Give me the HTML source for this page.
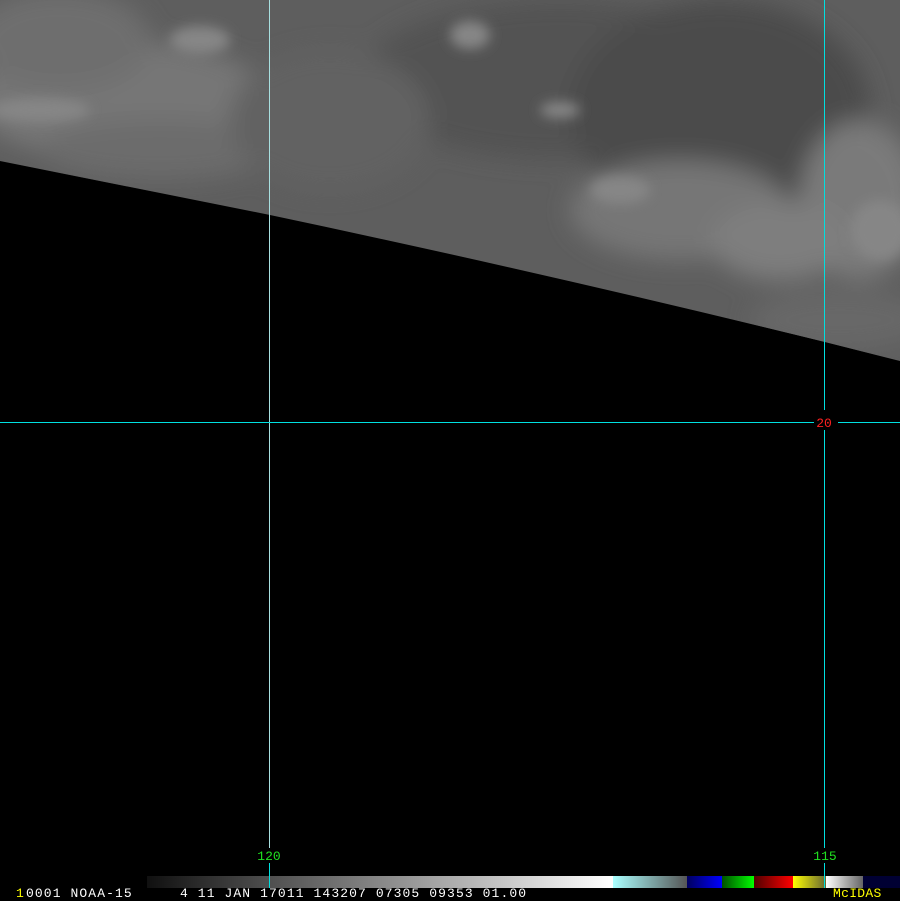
<!DOCTYPE html>
<html><head><style>
html,body{margin:0;padding:0;background:#000;width:900px;height:900px;overflow:hidden}
.t{position:absolute;font-family:"Liberation Mono",monospace;font-size:13px;line-height:13px;letter-spacing:1.1px}
</style></head><body>
<svg width="900" height="900" style="position:absolute;left:0;top:0" xmlns="http://www.w3.org/2000/svg">
<defs>
<clipPath id="c"><path d="M0,0 H900 V361 L825,342 Q540,272 270,215 L0,161 Z"/></clipPath>
<filter id="b" x="-50%" y="-50%" width="200%" height="200%"><feGaussianBlur stdDeviation="12"/></filter>
<filter id="b2" x="-50%" y="-50%" width="200%" height="200%"><feGaussianBlur stdDeviation="6"/></filter>
</defs>
<rect width="900" height="900" fill="#000"/>
<g clip-path="url(#c)">
<rect width="900" height="370" fill="#5e5e5e"/>
<g filter="url(#b)">
<ellipse cx="560" cy="80" rx="200" ry="80" fill="#525252"/>
<ellipse cx="720" cy="110" rx="150" ry="110" fill="#4c4c4c"/>
<ellipse cx="120" cy="100" rx="150" ry="60" fill="#767676"/>
<ellipse cx="60" cy="40" rx="90" ry="50" fill="#6e6e6e"/>
<ellipse cx="160" cy="150" rx="120" ry="30" fill="#6c6c6c"/>
<ellipse cx="680" cy="210" rx="110" ry="50" fill="#767676"/>
<ellipse cx="860" cy="200" rx="60" ry="80" fill="#7a7a7a"/>
<ellipse cx="780" cy="240" rx="70" ry="40" fill="#7e7e7e"/>
<ellipse cx="330" cy="120" rx="100" ry="70" fill="#626262"/>
<ellipse cx="840" cy="320" rx="90" ry="30" fill="#686868"/>
</g>
<g filter="url(#b2)" fill="#868686">
<ellipse cx="40" cy="110" rx="50" ry="12"/>
<ellipse cx="200" cy="40" rx="30" ry="14"/>
<ellipse cx="470" cy="35" rx="20" ry="14"/>
<ellipse cx="620" cy="190" rx="30" ry="14"/>
<ellipse cx="880" cy="230" rx="30" ry="30"/>
<ellipse cx="560" cy="110" rx="20" ry="8"/>
</g>
</g>
<rect x="269" y="0" width="1" height="848" fill="#a8e0e0"/>
<rect x="269" y="863" width="1" height="25" fill="#00e0e0"/>
<rect x="824" y="0" width="1" height="848" fill="#00e0e0"/>
<rect x="824" y="863" width="1" height="25" fill="#00e0e0"/>
<rect x="0" y="422" width="814" height="1" fill="#00e0e0"/>
<rect x="838" y="422" width="62" height="1" fill="#00e0e0"/>
<rect x="824" y="410" width="1" height="20" fill="#000"/>
<text x="824" y="427" fill="#ff2020" font-family="Liberation Mono,monospace" font-size="13" text-anchor="middle">20</text>
<text x="269" y="860" fill="#20e020" font-family="Liberation Mono,monospace" font-size="13" text-anchor="middle">120</text>
<text x="825" y="860" fill="#20e020" font-family="Liberation Mono,monospace" font-size="13" text-anchor="middle">115</text>
<defs>
<linearGradient id="g1"><stop offset="0" stop-color="#101010"/><stop offset="1" stop-color="#ffffff"/></linearGradient>
<linearGradient id="g2"><stop offset="0" stop-color="#aaffff"/><stop offset="1" stop-color="#555555"/></linearGradient>
<linearGradient id="g3"><stop offset="0" stop-color="#000060"/><stop offset="1" stop-color="#0000ff"/></linearGradient>
<linearGradient id="g4"><stop offset="0" stop-color="#005000"/><stop offset="1" stop-color="#00ff00"/></linearGradient>
<linearGradient id="g5"><stop offset="0" stop-color="#500000"/><stop offset="1" stop-color="#ff0000"/></linearGradient>
<linearGradient id="g6"><stop offset="0" stop-color="#ffff00"/><stop offset="1" stop-color="#666633"/></linearGradient>
<linearGradient id="g7"><stop offset="0" stop-color="#ffffff"/><stop offset="1" stop-color="#666666"/></linearGradient>
</defs>
<rect x="147" y="876" width="466" height="12" fill="url(#g1)"/>
<rect x="613" y="876" width="74" height="12" fill="url(#g2)"/>
<rect x="687" y="876" width="35" height="12" fill="url(#g3)"/>
<rect x="722" y="876" width="32" height="12" fill="url(#g4)"/>
<rect x="754" y="876" width="39" height="12" fill="url(#g5)"/>
<rect x="793" y="876" width="33" height="12" fill="url(#g6)"/>
<rect x="826" y="876" width="37" height="12" fill="url(#g7)"/>
<rect x="863" y="876" width="37" height="12" fill="#000033"/>
<rect x="824" y="876" width="1" height="12" fill="#00e0e0"/>
<rect x="269" y="876" width="1" height="12" fill="#00e0e0"/>
</svg>
<div class="t" style="left:16px;top:887px;color:#ffff00">1</div>
<div class="t" style="left:26px;top:887px;color:#fff">0001 NOAA-15</div>
<div class="t" style="left:180px;top:887px;color:#fff">4 11 JAN 17011 143207 07305 09353 01.00</div>
<div class="t" style="left:833px;top:887px;color:#ffff00;letter-spacing:0.3px">McIDAS</div>
</body></html>
